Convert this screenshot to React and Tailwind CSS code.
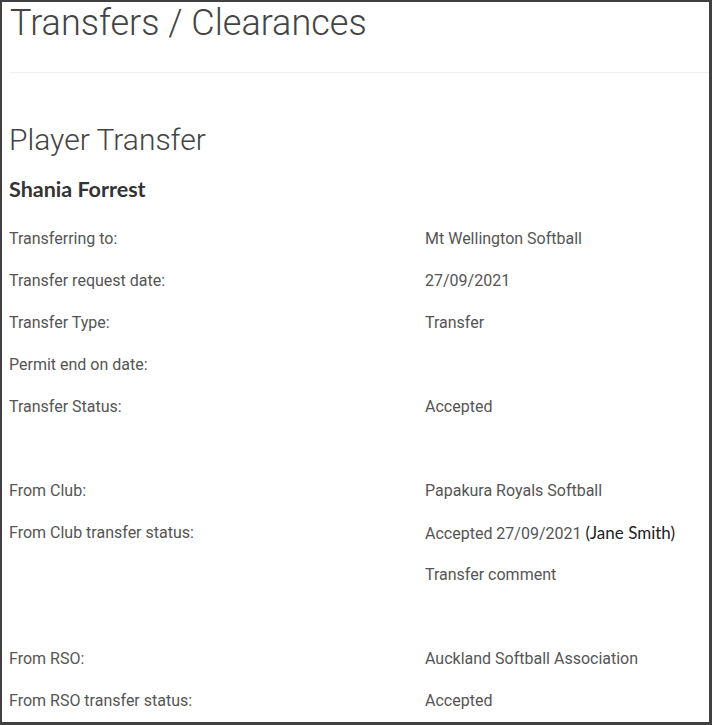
const ROWS = [
    ['Transferring to:', 'Mt Wellington Softball'],
    ['Transfer request date:', '27/09/2021'],
    ['Transfer Type:', 'Transfer'],
    ['Permit end on date:', ''],
    ['Transfer Status:', 'Accepted'],
    ['', ''],
    ['From Club:', 'Papakura Royals Softball'],
    ['From Club transfer status:', 'JANE'],
    ['', 'Transfer comment'],
    ['', ''],
    ['From RSO:', 'Auckland Softball Association'],
    ['From RSO transfer status:', 'Accepted'],
]

export default function App() {
    return (
        <div className="w-[712px] h-[725px] overflow-hidden bg-white border-l-2 border-t-2 border-r-[3px] border-b-[3px] border-[#404040] font-['Roboto',sans-serif]">
            <div className="pl-[7px]">
                {/* header */}
                <h1 className="pt-[3px] pl-px text-[36px] leading-[36px] font-light text-[#444]">Transfers / Clearances</h1>
                <div className="mt-[31px] h-px bg-[#eeeeee]"></div>

                <h2 className="mt-[49px] text-[30px] leading-[36px] font-light text-[#444]">Player Transfer</h2>
                <h3 className="mt-[19px] text-[21.5px] leading-[24px] font-bold text-[#333] font-['Lato',sans-serif]">Shania Forrest</h3>

                {/* details */}
                <div className="mt-[17px] grid grid-cols-[416px_1fr] text-[16px] leading-[42px] text-[#555]">
                    {ROWS.map(([label, value], i) => (
                        <div key={i} className="contents">
                            <div className="h-[42px]">{label}</div>
                            <div className="h-[42px]">
                                {value === 'JANE' ? (
                                    <>Accepted 27/09/2021 <span className="font-['Lato',sans-serif] text-[17px] text-[#222]">(Jane Smith)</span></>
                                ) : value}
                            </div>
                        </div>
                    ))}
                </div>
            </div>
        </div>
    )
}
